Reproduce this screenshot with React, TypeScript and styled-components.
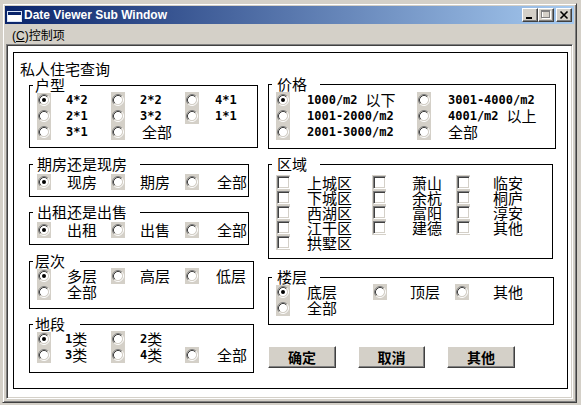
import React from "react";
import styled, { createGlobalStyle } from "styled-components";

const CJK = `"Noto Sans CJK SC", "Noto Sans", sans-serif`;
const MONO = `"DejaVu Sans Mono", "Liberation Mono", monospace`;
const UI = `"Liberation Sans", Arial, sans-serif`;

const GlobalStyle = createGlobalStyle`
  html, body { margin: 0; padding: 0; background: #d4d0c8; }
  body { width: 581px; height: 405px; overflow: hidden; font-family: ${CJK}; }
  * { box-sizing: border-box; }
`;

const Window = styled.div`
  margin: 3px 0 0 2px;
  width: 575px;
  height: 400px;
  display: flex;
  flex-direction: column;
  background: #d4d0c8;
  border: 1px solid;
  border-color: #d4d0c8 #404040 #404040 #d4d0c8;
  box-shadow: inset 1px 1px #fff, inset -1px -1px #808080;
  padding: 2px;
`;

const TitleBar = styled.div`
  height: 18px;
  flex: none;
  display: flex;
  align-items: center;
  padding-left: 2px;
  background: linear-gradient(to right, #0a246a, #a6caf0);
`;

const TitleText = styled.span`
  margin-left: 1px;
  color: #fff;
  font: bold 12px ${UI};
  white-space: nowrap;
`;

const CaptionGroup = styled.div`
  margin-left: auto;
  margin-right: 2px;
  display: flex;
`;

const CaptionButton = styled.div<{ $gapLeft?: number }>`
  width: 16px;
  height: 14px;
  margin-left: ${(p) => p.$gapLeft ?? 0}px;
  background: #d4d0c8;
  border: 1px solid;
  border-color: #fff #404040 #404040 #fff;
  box-shadow: inset -1px -1px #808080;
  display: flex;
`;

const MenuBar = styled.div`
  height: 20px;
  flex: none;
  display: flex;
  align-items: center;
  padding-left: 7px;
  font: 12px ${UI};
  color: #000;
`;

const MenuItem = styled.span`
  font-family: ${UI};
  span { font-family: ${CJK}; font-size: 12px; }
`;

const Client = styled.div`
  flex: 1;
  margin: 0 1px 1px 1px;
  display: flex;
  flex-direction: column;
  background: #fff;
  border: 1px solid;
  border-color: #808080 #fff #fff #808080;
  box-shadow: inset 1px 1px #404040, inset -1px -1px #d4d0c8;
  padding: 7px 4px 9px 6px;
`;

const MainPanel = styled.div`
  flex: 1;
  border: 1px solid #000;
  background: #fff;
  padding: 8px 0 0 6px;
`;

const PanelTitle = styled.div`
  font: 15px/16px ${CJK};
  color: #000;
`;

const Columns = styled.div`
  margin: 7px 0 0 9px;
  display: grid;
  grid-template-columns: 229px 288px;
  column-gap: 10px;
  align-items: start;
`;

const Column = styled.div<{ $pt?: number }>`
  display: flex;
  flex-direction: column;
  padding-top: ${(p) => p.$pt ?? 0}px;
`;

const Group = styled.div<{ $w: number; $mt?: number; $pt: number; $pb: number; $pl?: number }>`
  position: relative;
  width: ${(p) => p.$w}px;
  margin-top: ${(p) => p.$mt ?? 0}px;
  border: 1px solid #000;
  padding: ${(p) => p.$pt}px 0 ${(p) => p.$pb}px ${(p) => p.$pl ?? 7}px;
`;

const Legend = styled.span<{ $w: number; $pl: number }>`
  position: absolute;
  top: -9px;
  left: 3px;
  width: ${(p) => p.$w}px;
  padding-left: ${(p) => p.$pl}px;
  background: #fff;
  font: 15px/16px ${CJK};
  color: #000;
  white-space: nowrap;
`;

const OptGrid = styled.div<{ $cols: string; $row: number }>`
  display: grid;
  grid-template-columns: ${(p) => p.$cols};
  grid-auto-rows: ${(p) => p.$row}px;
`;

const Opt = styled.div<{ $gap: number }>`
  display: flex;
  align-items: stretch;
  white-space: nowrap;
  & > span:last-child {
    margin-left: ${(p) => p.$gap - 14}px;
  }
`;

const CtrlCell = styled.span`
  width: 14px;
  flex: none;
  background: #d4d0c8;
  display: flex;
  align-items: center;
  justify-content: center;
`;

const CheckBox = styled.span`
  width: 13px;
  height: 13px;
  background: #fff;
  border: 1px solid;
  border-color: #808080 #fff #fff #808080;
  box-shadow: inset 1px 1px #404040, inset -1px -1px #d4d0c8;
`;

const Label = styled.span<{ $lh: number }>`
  font: 15px/${(p) => p.$lh}px ${CJK};
  color: #000;
  display: flex;
  align-items: center;
`;

const Mono = styled.b`
  font: bold 12px ${MONO};
`;

const Suffix = styled.span`
  margin-left: 8px;
`;

const ButtonRow = styled.div`
  margin-top: 21px;
  display: flex;
  gap: 22px;
`;

const PushButton = styled.button<{ $w: number }>`
  width: ${(p) => p.$w}px;
  height: 22px;
  padding: 0;
  background: #d4d0c8;
  border: 1px solid;
  border-color: #fff #404040 #404040 #fff;
  box-shadow: inset -1px -1px #808080;
  font: bold 14px/18px ${CJK};
  color: #000;
`;

const RadioIcon = ({ on }: { on?: boolean }) => (
  <svg width="12" height="12" viewBox="0 0 12 12">
    <circle cx="6" cy="6" r="4.2" fill="#fff" />
    <path d="M2.11 9.89A5.5 5.5 0 0 1 9.89 2.11" fill="none" stroke="#808080" />
    <path d="M9.89 2.11A5.5 5.5 0 0 1 2.11 9.89" fill="none" stroke="#fff" />
    <path d="M2.82 9.18A4.5 4.5 0 0 1 9.18 2.82" fill="none" stroke="#404040" />
    <path d="M9.18 2.82A4.5 4.5 0 0 1 2.82 9.18" fill="none" stroke="#d4d0c8" />
    {on && <circle cx="6" cy="6" r="2" fill="#000" />}
  </svg>
);

type OptProps = { gap: number; lh?: number; on?: boolean; check?: boolean; children: React.ReactNode };

const Option = ({ gap, lh = 16, on, check, children }: OptProps) => (
  <Opt $gap={gap}>
    <CtrlCell>{check ? <CheckBox /> : <RadioIcon on={on} />}</CtrlCell>
    <Label $lh={lh}>{children}</Label>
  </Opt>
);

const AppIcon = () => (
  <svg width="16" height="16" viewBox="0 0 16 16">
    <rect x="0.5" y="4.5" width="14" height="10" fill="#fff" stroke="#d8e4f8" />
    <rect x="1" y="5" width="13" height="3" fill="#0a246a" />
  </svg>
);

export default function App() {
  const L = "74px 74px 1fr";
  return (
    <>
      <GlobalStyle />
      <Window>
        <TitleBar>
          <AppIcon />
          <TitleText>Date Viewer Sub Window</TitleText>
          <CaptionGroup>
            <CaptionButton>
              <svg width="14" height="12" viewBox="0 0 14 12">
                <rect x="3" y="8" width="6" height="2" fill="#000" />
              </svg>
            </CaptionButton>
            <CaptionButton>
              <svg width="14" height="12" viewBox="0 0 14 12">
                <rect x="3.5" y="2.5" width="8" height="7" fill="none" stroke="#fff" />
                <rect x="2.5" y="1.5" width="8" height="7" fill="none" stroke="#808080" />
                <rect x="2" y="1" width="9" height="2" fill="#808080" />
              </svg>
            </CaptionButton>
            <CaptionButton $gapLeft={2}>
              <svg width="14" height="12" viewBox="0 0 14 12">
                <path d="M3.5 2.5L10.5 9.5M10.5 2.5L3.5 9.5" stroke="#000" strokeWidth="1.6" />
              </svg>
            </CaptionButton>
          </CaptionGroup>
        </TitleBar>
        <MenuBar>
          <MenuItem>
            (<u>C</u>)<span>控制项</span>
          </MenuItem>
        </MenuBar>
        <Client>
          <MainPanel>
            <PanelTitle>私人住宅查询</PanelTitle>
            <Columns>
              <Column $pt={1}>
                <Group $w={229} $pt={6} $pb={7}>
                  <Legend $w={47} $pl={2}>户型</Legend>
                  <OptGrid $cols={L} $row={16}>
                    <Option gap={29} on><Mono>4*2</Mono></Option>
                    <Option gap={29}><Mono>2*2</Mono></Option>
                    <Option gap={30}><Mono>4*1</Mono></Option>
                    <Option gap={29}><Mono>2*1</Mono></Option>
                    <Option gap={29}><Mono>3*2</Mono></Option>
                    <Option gap={30}><Mono>1*1</Mono></Option>
                    <Option gap={29}><Mono>3*1</Mono></Option>
                    <Option gap={31}>全部</Option>
                  </OptGrid>
                </Group>
                <Group $w={220} $mt={16} $pt={9} $pb={6}>
                  <Legend $w={107} $pl={4}>期房还是现房</Legend>
                  <OptGrid $cols={L} $row={16}>
                    <Option gap={30} on>现房</Option>
                    <Option gap={29}>期房</Option>
                    <Option gap={32}>全部</Option>
                  </OptGrid>
                </Group>
                <Group $w={220} $mt={15} $pt={9} $pb={6}>
                  <Legend $w={107} $pl={4}>出租还是出售</Legend>
                  <OptGrid $cols={L} $row={16}>
                    <Option gap={30} on>出租</Option>
                    <Option gap={29}>出售</Option>
                    <Option gap={32}>全部</Option>
                  </OptGrid>
                </Group>
                <Group $w={225} $mt={16} $pt={6} $pb={8}>
                  <Legend $w={47} $pl={2}>层次</Legend>
                  <OptGrid $cols={L} $row={16}>
                    <Option gap={30} on>多层</Option>
                    <Option gap={29}>高层</Option>
                    <Option gap={31}>低层</Option>
                    <Option gap={30}>全部</Option>
                  </OptGrid>
                </Group>
                <Group $w={225} $mt={15} $pt={6} $pb={9}>
                  <Legend $w={47} $pl={2}>地段</Legend>
                  <OptGrid $cols={L} $row={16}>
                    <Option gap={28} on><Mono>1</Mono>类</Option>
                    <Option gap={29}><Mono>2</Mono>类</Option>
                    <span />
                    <Option gap={28}><Mono>3</Mono>类</Option>
                    <Option gap={29}><Mono>4</Mono>类</Option>
                    <Option gap={32}>全部</Option>
                  </OptGrid>
                </Group>
              </Column>
              <Column>
                <Group $w={288} $pt={7} $pb={8}>
                  <Legend $w={48} $pl={5}>价格</Legend>
                  <OptGrid $cols="141px 1fr" $row={16}>
                    <Option gap={31} on><Mono>1000/m2</Mono><Suffix>以下</Suffix></Option>
                    <Option gap={31}><Mono>3001-4000/m2</Mono></Option>
                    <Option gap={31}><Mono>1001-2000/m2</Mono></Option>
                    <Option gap={31}><Mono>4001/m2</Mono><Suffix>以上</Suffix></Option>
                    <Option gap={31}><Mono>2001-3000/m2</Mono></Option>
                    <Option gap={31}>全部</Option>
                  </OptGrid>
                </Group>
                <Group $w={285} $mt={15} $pt={10} $pb={8}>
                  <Legend $w={48} $pl={5}>区域</Legend>
                  <OptGrid $cols="96px 84px 1fr" $row={15}>
                    <Option check gap={31} lh={15}>上城区</Option>
                    <Option check gap={40} lh={15}>萧山</Option>
                    <Option check gap={37} lh={15}>临安</Option>
                    <Option check gap={31} lh={15}>下城区</Option>
                    <Option check gap={40} lh={15}>余杭</Option>
                    <Option check gap={37} lh={15}>桐庐</Option>
                    <Option check gap={31} lh={15}>西湖区</Option>
                    <Option check gap={40} lh={15}>富阳</Option>
                    <Option check gap={37} lh={15}>淳安</Option>
                    <Option check gap={31} lh={15}>江干区</Option>
                    <Option check gap={40} lh={15}>建德</Option>
                    <Option check gap={37} lh={15}>其他</Option>
                    <Option check gap={31} lh={15}>拱墅区</Option>
                  </OptGrid>
                </Group>
                <Group $w={286} $mt={18} $pt={6} $pb={8}>
                  <Legend $w={48} $pl={5}>楼层</Legend>
                  <OptGrid $cols="97px 82px 1fr" $row={16}>
                    <Option gap={31} on>底层</Option>
                    <Option gap={37}>顶层</Option>
                    <Option gap={38}>其他</Option>
                    <Option gap={31}>全部</Option>
                  </OptGrid>
                </Group>
                <ButtonRow>
                  <PushButton $w={68}>确定</PushButton>
                  <PushButton $w={67}>取消</PushButton>
                  <PushButton $w={68}>其他</PushButton>
                </ButtonRow>
              </Column>
            </Columns>
          </MainPanel>
        </Client>
      </Window>
    </>
  );
}
